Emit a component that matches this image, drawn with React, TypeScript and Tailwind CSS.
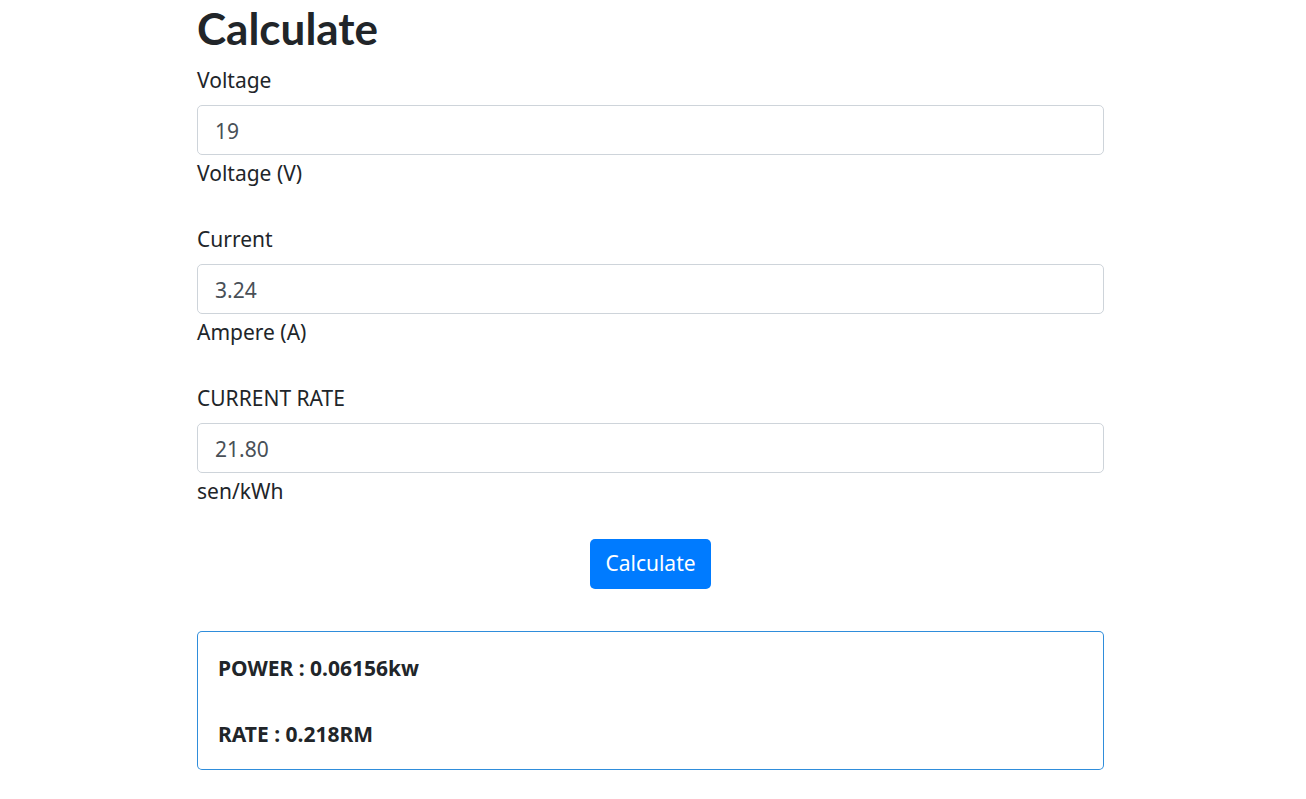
const font = { fontFamily: '"Noto Sans", "Open Sans", sans-serif' };

function Field({ label, value, hint, last }: { label: string; value: string; hint: string; last?: boolean }) {
  return (
    <div className={last ? 'mb-[33px]' : 'mb-[36px]'}>
      <label className="block text-[21px] leading-[30px] mb-[10px] text-[#212529]">{label}</label>
      <input
        readOnly
        value={value}
        className="block w-full h-[50px] pl-[17px] pr-[16px] pt-[2px] text-[21px] text-[#495057] bg-white border border-[#ced4da] rounded-[5px] outline-none"
      />
      <small className="block mt-[3px] text-[21px] leading-[30px] text-[#212529]">{hint}</small>
    </div>
  );
}

export default function App() {
  return (
    <div className="min-h-screen bg-white" style={font}>
      <div className="ml-[197px] w-[907px]">
        <h1
          className="text-[44px] font-bold leading-[56px] text-[#212529] mb-[9px]"
          style={{ fontFamily: 'Lato, "Noto Sans", sans-serif' }}
        >
          Calculate
        </h1>
        <Field label="Voltage" value="19" hint="Voltage (V)" />
        <Field label="Current" value="3.24" hint="Ampere (A)" />
        <Field label="CURRENT RATE" value="21.80" hint="sen/kWh" last />
        <div className="flex justify-center mb-[42px]">
          <button className="h-[50px] px-[15px] bg-[#007bff] text-white text-[21px] rounded-[5px]">Calculate</button>
        </div>
        {/* result card: 1px blue frame */}
        <div className="rounded-[5px] bg-[#2f8ddb] p-px">
          <div className="h-[137px] rounded-[4px] bg-white px-[20px] pt-[21px]">
            <p className="text-[21px] leading-[30px] font-bold text-[#212529]">POWER : 0.06156kw</p>
            <p className="text-[21px] leading-[30px] font-bold text-[#212529] mt-[36px]">RATE : 0.218RM</p>
          </div>
        </div>
      </div>
    </div>
  );
}
